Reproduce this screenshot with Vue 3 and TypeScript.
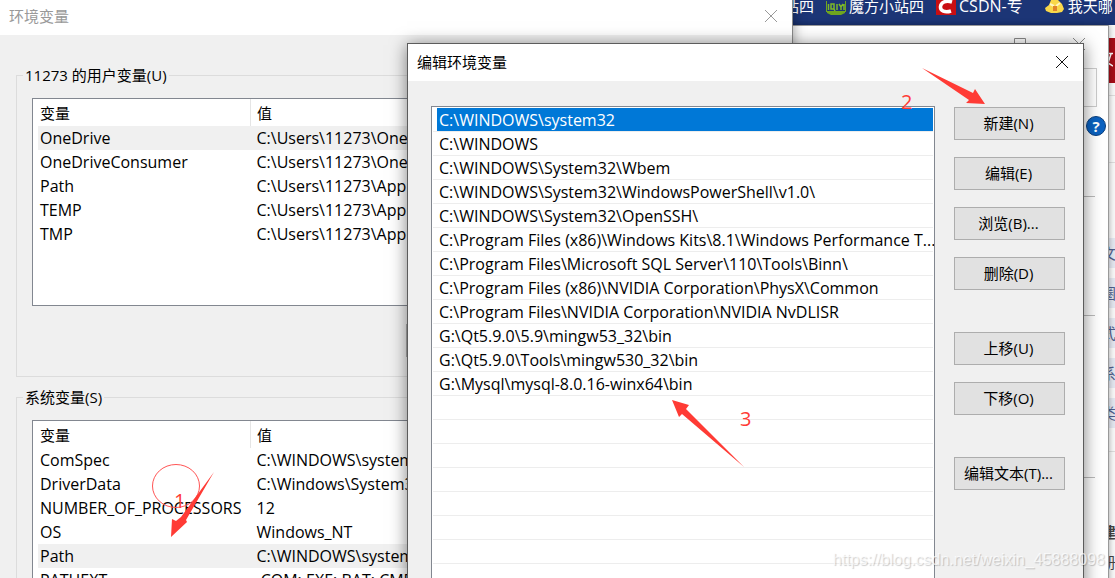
<script setup lang="ts">
import { ref } from 'vue'

interface Variable {
  name: string
  value: string
}

interface VariableGroup {
  id: string
  title: string
  selected: string
  rows: Variable[]
}

const groups: VariableGroup[] = [
  {
    id: 'user',
    title: '11273 的用户变量(U)',
    selected: 'OneDrive',
    rows: [
      { name: 'OneDrive', value: 'C:\\Users\\11273\\OneDrive' },
      { name: 'OneDriveConsumer', value: 'C:\\Users\\11273\\OneDrive' },
      { name: 'Path', value: 'C:\\Users\\11273\\AppData' },
      { name: 'TEMP', value: 'C:\\Users\\11273\\AppData' },
      { name: 'TMP', value: 'C:\\Users\\11273\\AppData' },
    ],
  },
  {
    id: 'system',
    title: '系统变量(S)',
    selected: 'Path',
    rows: [
      { name: 'ComSpec', value: 'C:\\WINDOWS\\system32' },
      { name: 'DriverData', value: 'C:\\Windows\\System32' },
      { name: 'NUMBER_OF_PROCESSORS', value: '12' },
      { name: 'OS', value: 'Windows_NT' },
      { name: 'Path', value: 'C:\\WINDOWS\\system32' },
      { name: 'PATHEXT', value: '.COM;.EXE;.BAT;.CMD' },
    ],
  },
]

const paths: string[] = [
  'C:\\WINDOWS\\system32',
  'C:\\WINDOWS',
  'C:\\WINDOWS\\System32\\Wbem',
  'C:\\WINDOWS\\System32\\WindowsPowerShell\\v1.0\\',
  'C:\\WINDOWS\\System32\\OpenSSH\\',
  'C:\\Program Files (x86)\\Windows Kits\\8.1\\Windows Performance T...',
  'C:\\Program Files\\Microsoft SQL Server\\110\\Tools\\Binn\\',
  'C:\\Program Files (x86)\\NVIDIA Corporation\\PhysX\\Common',
  'C:\\Program Files\\NVIDIA Corporation\\NVIDIA NvDLISR',
  'G:\\Qt5.9.0\\5.9\\mingw53_32\\bin',
  'G:\\Qt5.9.0\\Tools\\mingw530_32\\bin',
  'G:\\Mysql\\mysql-8.0.16-winx64\\bin',
]
const emptyRows = 9
const selectedPath = ref(0)

const actionGroups: string[][] = [
  ['新建(N)', '编辑(E)', '浏览(B)...', '删除(D)'],
  ['上移(U)', '下移(O)'],
  ['编辑文本(T)...'],
]

const pageTags: string[] = ['文', '圈', '式', '系', '类']
</script>

<template>
  <div class="desktop">
    <div class="page">
      <div class="page-banner">
        <svg width="12" height="45" viewBox="0 0 12 45" aria-hidden="true">
          <path d="M6 15.500h6M10 16L7 25l5 3" fill="none" stroke="#fff" stroke-width="1.500" />
        </svg>
      </div>
      <div class="page-tabs"></div>
      <div class="page-tags">
        <span v-for="tag in pageTags" :key="tag">{{ tag }}</span>
      </div>
      <div class="page-foot"><b>建</b><span>册</span></div>
    </div>

    <nav class="bookmarks">
      <a href="#" class="first">站四</a>
      <a href="#">
        <svg width="20" height="20" viewBox="0 0 20 20" aria-hidden="true">
          <path d="M.5 1V12M19.500 1V12" fill="none" stroke="#6fa51f" stroke-width="1" />
          <path d="M2.500 4v6M5 4h3v5H5zM8 9l1 2M11 4v6M13 4l2 3 2-3M15 7v3M18 4v6" fill="none" stroke="#7cb82a" stroke-width="1.500" />
          <path d="M1 11H19V13L15 15H5L1 13z" fill="#6fa51f" />
        </svg>
        魔方小站四
      </a>
      <a href="#" class="csdn">
        <svg width="20" height="20" viewBox="0 0 20 20" aria-hidden="true">
          <rect width="20" height="15" fill="#c90e12" />
          <path d="M16 2C10 0 5 2 4.500 6.500S9 13 15 11" fill="none" stroke="#fff" stroke-width="3.500" />
        </svg>
        CSDN-专
      </a>
      <a href="#" class="chick">
        <svg width="20" height="20" viewBox="0 0 20 20" aria-hidden="true">
          <path d="M6 0h7l4 4 2 5-2 3-5 1H6L1 11 0 8l4-3z" fill="#f9d84a" />
          <path d="M5 4l4 2M15 3l-4 3" stroke="#fff6c0" stroke-width="2" />
          <path d="M8 6h4v5H8z" fill="#e0842b" />
        </svg>
        我天哪
      </a>
    </nav>

    <section class="window back" aria-label="系统">
      <svg class="caption-icons" width="130" height="14" viewBox="0 0 130 14" aria-hidden="true">
        <path d="M0 6.500h12M58.500 1.500h11v11h-11zM117 1l12 12M129 1l-12 12" fill="none" stroke="#8a8a8a" />
      </svg>
      <div class="back-search"></div>
      <button class="help" type="button" aria-label="帮助">?</button>
      <div class="rules"><hr /><hr /><hr /></div>
    </section>

    <section class="window env" aria-label="环境变量">
      <header>
        <h1>环境变量</h1>
        <button type="button" class="close" aria-label="关闭">
          <svg width="14" height="14" viewBox="0 0 14 14"><path d="M1 1l12 12M13 1L1 13" stroke="#999" fill="none" /></svg>
        </button>
      </header>
      <fieldset v-for="group in groups" :key="group.id">
        <legend>{{ group.title }}</legend>
        <div class="variables">
          <table>
            <thead>
              <tr><th scope="col">变量</th><th scope="col">值</th></tr>
            </thead>
            <tbody>
              <tr v-for="row in group.rows" :key="row.name" :class="{ current: row.name === group.selected }">
                <td>{{ row.name }}</td>
                <td>{{ row.value }}</td>
              </tr>
            </tbody>
          </table>
        </div>
        <div class="group-actions"><button type="button" class="push" aria-label="新建"></button></div>
      </fieldset>
      <svg class="mark mark-one" width="70" height="80" viewBox="0 0 70 80" aria-hidden="true">
        <ellipse cx="26" cy="25" rx="23.500" ry="21.500" fill="none" stroke="#f55" />
        <path d="M64 11L36 59 37 61 21 76 22 58 26 60 31 56 64 11z" fill="#ff3b35" />
      </svg>
      <span class="digit digit-one">1</span>
    </section>

    <section class="window dialog" role="dialog" aria-label="编辑环境变量">
      <header>
        <h2>编辑环境变量</h2>
        <button type="button" class="close" aria-label="关闭">
          <svg width="14" height="14" viewBox="0 0 14 14"><path d="M1 1l12 12M13 1L1 13" stroke="#111" fill="none" /></svg>
        </button>
      </header>
      <div class="dialog-body">
        <ul class="paths" role="listbox" aria-label="编辑环境变量">
          <li
            v-for="(path, index) in paths"
            :key="path"
            role="option"
            :aria-selected="index === selectedPath"
            @click="selectedPath = index"
          >
            <span>{{ path }}</span>
          </li>
          <li v-for="n in emptyRows" :key="n" role="presentation"></li>
        </ul>
        <div class="actions">
          <div v-for="(labels, index) in actionGroups" :key="index" class="action-group">
            <button v-for="label in labels" :key="label" type="button" class="push">{{ label }}</button>
          </div>
        </div>
      </div>
      <span class="digit digit-two">2</span>
      <svg class="mark mark-two" width="66" height="40" viewBox="0 0 66 40" aria-hidden="true">
        <path d="M1 1L52 26 54 22 64 37 45 36 48 33 1 1z" fill="#ff3b35" />
      </svg>
      <svg class="mark mark-three" width="74" height="70" viewBox="0 0 74 70" aria-hidden="true">
        <path d="M1 1L18 6 15 10 73 68 11 15 8 18z" fill="#ff3b35" />
      </svg>
      <span class="digit digit-three">3</span>
    </section>

    <span class="watermark">https://blog.csdn.net/weixin_45888098</span>
  </div>
</template>

<style>
body {
  margin: 0;
}
</style>

<style scoped>
.desktop {
  position: relative;
  height: 100vh;
  overflow: hidden;
  background: #fff;
  color: #000;
  font: 15px/20px "Open Sans", "Noto Sans CJK SC", sans-serif;
}
button {
  font: inherit;
  color: inherit;
}
.bookmarks {
  position: absolute;
  top: 0;
  left: 0;
  right: 0;
  display: flex;
  height: 25px;
  padding-left: 784px;
  box-sizing: border-box;
  overflow: hidden;
  background: #1c3576;
}
.bookmarks a {
  display: flex;
  flex: none;
  gap: 3px;
  margin-left: 12px;
  color: #fff;
  line-height: 12px;
  text-decoration: none;
  white-space: nowrap;
}
.bookmarks .first {
  margin-left: 0;
}
.bookmarks .csdn {
  font-size: 16px;
}
.bookmarks .chick {
  margin-left: 22px;
}
.page {
  position: absolute;
  top: 25px;
  right: 0;
  bottom: 0;
  width: 14px;
  overflow: hidden;
  background: #f8f8f8;
}
.page-banner {
  height: 45px;
  margin-top: 13px;
  background: #a50d17;
}
.page-tabs {
  height: 66px;
  margin-top: 12px;
  border-top: 1px solid #ddd;
  border-bottom: 1px solid #ddd;
}
.page-tags {
  display: flex;
  flex-direction: column;
  gap: 10px;
  padding: 75px 0 23px;
  border-bottom: 1px solid #ddd;
  color: #4e5f8d;
  line-height: 30px;
}
.page-tags span {
  height: 30px;
  background: #e3e7f0;
}
.page-foot {
  display: flex;
  flex-direction: column;
  padding-top: 65px;
  color: #444;
  line-height: 30px;
}
.window {
  position: absolute;
  box-sizing: border-box;
}
.back {
  top: 25px;
  left: 760px;
  right: 6px;
  bottom: -20px;
  border: 1px solid #999;
  background: #fff;
  box-shadow: 0 0 6px rgba(0, 0, 0, 0.35);
}
.caption-icons {
  position: absolute;
  top: 11px;
  right: 22px;
}
.back-search {
  height: 37px;
  margin: 42px 11px 0 20px;
  border: 1px solid #ccc;
}
.help {
  display: block;
  width: 20px;
  height: 20px;
  margin: 9px 2px 0 auto;
  padding: 0;
  border: 1px solid #0b3f7c;
  border-radius: 50%;
  background: #0b62c1;
  color: #fff;
  font-weight: bold;
  line-height: 18px;
}
.rules {
  padding: 60px 13px 0 20px;
}
.rules hr {
  height: 1px;
  margin: 0 0 118px;
  border: 0;
  background: #bbb;
}
.rules hr + hr {
  margin-bottom: 161px;
}
.env {
  top: 0;
  left: 0;
  right: 322px;
  bottom: -40px;
  border-right: 1px solid #888;
  background: #f0f0f0;
  box-shadow: 0 0 12px rgba(0, 0, 0, 0.4);
}
header {
  display: flex;
  align-items: center;
  justify-content: space-between;
  box-sizing: border-box;
  background: #fff;
}
h1,
h2 {
  margin: 0;
  font-size: 15px;
  font-weight: normal;
}
.env header {
  height: 35px;
  margin-bottom: 30px;
  padding: 0 14px 4px 9px;
  color: #999;
}
.close {
  display: flex;
  padding: 0;
  border: 0;
  background: none;
}
fieldset {
  min-width: 0;
  margin: 0 16px 10px;
  padding: 13px 15px 19px;
  border: 1px solid #dcdcdc;
}
legend {
  height: 20px;
  padding: 0 2px;
  margin-left: -9px;
}
.variables {
  height: 208px;
  box-sizing: border-box;
  padding-left: 5px;
  overflow: hidden;
  border: 1px solid #828790;
  background: #fff;
}
table {
  width: 100%;
  border-collapse: collapse;
  table-layout: fixed;
}
th,
td {
  height: 24px;
  padding: 0 0 0 2px;
  font-weight: normal;
  text-align: left;
  white-space: nowrap;
}
td,
.paths {
  font-size: 16px;
}
th {
  height: 27px;
}
th:first-child {
  width: 210px;
  border-right: 1px solid #e5e5e5;
}
th + th,
td + td {
  padding-left: 6px;
}
.current {
  background: #f0f0f0;
}
.group-actions {
  display: flex;
  margin: 18px 0 0 374px;
}
.push {
  width: 111px;
  height: 33px;
  padding: 0 2px 2px 0;
  border: 1px solid #adadad;
  background: #e1e1e1;
}
.dialog {
  top: 43px;
  left: 407px;
  right: 31px;
  bottom: -60px;
  display: flex;
  flex-direction: column;
  border: 1px solid #5c5c5c;
  background: #f0f0f0;
  box-shadow: 0 2px 16px rgba(0, 0, 0, 0.5);
}
.dialog header {
  flex: none;
  height: 37px;
  padding: 0 14px 2px 9px;
}
.dialog-body {
  display: flex;
  flex: 1;
  min-height: 0;
  gap: 19px;
  padding: 25px 18px 0 23px;
}
.paths {
  flex: 1;
  min-width: 0;
  margin: 0;
  padding: 1px 1px 0;
  overflow: hidden;
  border: 1px solid #828790;
  background: #fff;
  list-style: none;
}
.paths li {
  height: 23px;
  padding-left: 4px;
  border-bottom: 1px solid #ededed;
  white-space: nowrap;
}
.paths span {
  display: block;
  height: 23px;
  padding-left: 2px;
  line-height: 24px;
}
.paths [aria-selected="true"] span {
  background: #0078d7;
  color: #fff;
}
.actions {
  display: flex;
  flex-direction: column;
  gap: 42px;
  padding-top: 1px;
}
.action-group {
  display: flex;
  flex-direction: column;
  gap: 17px;
}
.mark,
.digit {
  position: absolute;
  pointer-events: none;
}
.digit {
  color: #ff3b35;
  font-size: 20px;
}
.mark-one {
  top: 461px;
  left: 150px;
}
.digit-one {
  top: 491px;
  left: 174px;
}
.mark-two {
  top: 23px;
  left: 513px;
}
.digit-two {
  top: 48px;
  left: 493px;
}
.mark-three {
  top: 355px;
  left: 263px;
}
.digit-three {
  top: 365px;
  left: 332px;
}
.watermark {
  position: absolute;
  right: 10px;
  bottom: 8px;
  color: rgba(255, 255, 255, 0.7);
  font: 16px/20px "Liberation Sans", Arial, sans-serif;
  text-shadow: 1px 1px 1px rgba(0, 0, 0, 0.2);
}
</style>
